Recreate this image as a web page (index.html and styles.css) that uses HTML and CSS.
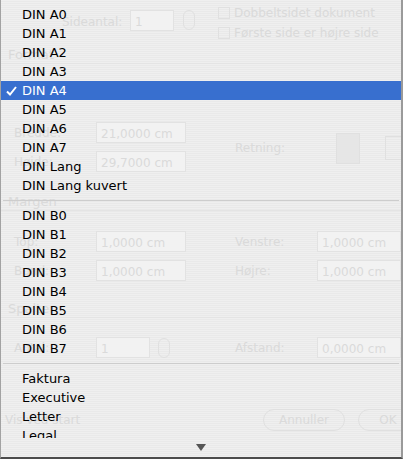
FILE: index.html
```html
<!DOCTYPE html>
<html lang="da">
<head>
  <meta charset="UTF-8" />
  <title>Papirformat</title>
  <link rel="stylesheet" href="styles.css">
</head>
<body>
  <!-- dialogen bag menuen -->
  <div class="dialog">
    <div class="pages">
      <span class="label">Sideantal:</span>
      <span class="field count">1</span>
      <span class="stepper"></span>
      <div class="checks">
        <div class="check"><span class="box"></span>Dobbeltsidet dokument</div>
        <div class="check"><span class="box"></span>Første side er højre side</div>
      </div>
    </div>

    <div class="heading">Format</div>
    <div class="section format">
      <div class="col">
        <div class="row"><span class="label">Bredde:</span><span class="field">21,0000 cm</span></div>
        <div class="row"><span class="label">Højde:</span><span class="field">29,7000 cm</span></div>
      </div>
      <div class="turn">
        <span class="label">Retning:</span>
        <span class="page portrait"></span>
        <span class="page landscape"></span>
      </div>
    </div>

    <div class="heading margin-head">Margen</div>
    <div class="section margins">
      <div class="row"><span class="label">Top:</span><span class="field">1,0000 cm</span><span class="label right">Venstre:</span><span class="field wide">1,0000 cm</span></div>
      <div class="row"><span class="label">Bund:</span><span class="field">1,0000 cm</span><span class="label right">Højre:</span><span class="field wide">1,0000 cm</span></div>
    </div>

    <div class="heading cols-head">Spalter</div>
    <div class="section cols">
      <div class="row"><span class="label">Antal:</span><span class="field short">1</span><span class="stepper"></span><span class="label right gap">Afstand:</span><span class="field wide">0,0000 cm</span></div>
    </div>

    <div class="footer">
      <span class="show">Vis ved start</span>
      <span class="btn">Annuller</span>
      <span class="btn ok">OK</span>
    </div>
  </div>

  <!-- popup-menuen -->
  <div class="menu">
    <div class="list">
      <div class="item"><span class="mark"></span>DIN A0</div>
      <div class="item"><span class="mark"></span>DIN A1</div>
      <div class="item"><span class="mark"></span>DIN A2</div>
      <div class="item"><span class="mark"></span>DIN A3</div>
      <div class="item on">
        <span class="mark">
          <svg width="11" height="10" viewBox="0 0 11 10"><polyline points="1,5.5 4,8.5 10,1" fill="none" stroke="#fff" stroke-width="2"/></svg>
        </span>DIN A4
      </div>
      <div class="item"><span class="mark"></span>DIN A5</div>
      <div class="item"><span class="mark"></span>DIN A6</div>
      <div class="item"><span class="mark"></span>DIN A7</div>
      <div class="item"><span class="mark"></span>DIN Lang</div>
      <div class="item"><span class="mark"></span>DIN Lang kuvert</div>
      <div class="sep"></div>
      <div class="item"><span class="mark"></span>DIN B0</div>
      <div class="item"><span class="mark"></span>DIN B1</div>
      <div class="item"><span class="mark"></span>DIN B2</div>
      <div class="item"><span class="mark"></span>DIN B3</div>
      <div class="item"><span class="mark"></span>DIN B4</div>
      <div class="item"><span class="mark"></span>DIN B5</div>
      <div class="item"><span class="mark"></span>DIN B6</div>
      <div class="item"><span class="mark"></span>DIN B7</div>
      <div class="sep"></div>
      <div class="item"><span class="mark"></span>Faktura</div>
      <div class="item"><span class="mark"></span>Executive</div>
      <div class="item"><span class="mark"></span>Letter</div>
      <div class="item"><span class="mark"></span>Legal</div>
    </div>
    <div class="more"><span class="arrow"></span></div>
  </div>
</body>
</html>
```

FILE: styles.css
```css
body {
  margin: 0;
  width: 403px;
  height: 459px;
  overflow: hidden;
  position: relative;
  font-family: "DejaVu Sans", sans-serif;
  background: repeating-linear-gradient(#efefef 0 1px, #e9e9e9 1px 2px);
}

/* faded dialog */
.dialog {
  height: 459px;
  font-size: 12px;
  color: #dadada;
}
.label {
  line-height: 16px;
}
.field {
  box-sizing: border-box;
  height: 21px;
  padding: 3px 0 0 4px;
  border: 1px solid #e2e2e2;
  background: #f2f2f2;
  line-height: 16px;
}
.stepper {
  box-sizing: border-box;
  width: 12px;
  height: 20px;
  border: 1px solid #e0e0e0;
  border-radius: 6px;
}

.pages {
  height: 47px;
  display: flex;
  align-items: flex-start;
  padding-left: 62px;
  box-sizing: border-box;
}
.pages .label {
  margin-top: 14px;
  width: 68px;
}
.pages .count {
  margin-top: 10px;
  width: 44px;
}
.pages .stepper {
  margin: 10px 0 0 9px;
}
.checks {
  margin: 5px 0 0 23px;
}
.check {
  display: flex;
  align-items: center;
  height: 16px;
  margin-bottom: 4px;
}
.box {
  width: 10px;
  height: 10px;
  border: 1px solid #e0e0e0;
  margin-right: 4px;
}

.heading {
  height: 16px;
  line-height: 16px;
  padding-left: 8px;
  font-size: 13px;
  border-bottom: 1px solid #e4e4e4;
}

.section {
  padding-left: 14px;
}
.row {
  display: flex;
  align-items: center;
  height: 21px;
  margin-bottom: 8px;
}
.row .label {
  width: 82px;
}
.row .field {
  width: 90px;
}
.row .label.right {
  width: 82px;
  margin-left: 49px;
}
.row .field.wide {
  width: 84px;
}
.row .field.short {
  width: 54px;
}
.row .stepper {
  margin-left: 8px;
}
.row .label.gap {
  margin-left: 65px;
}

.format {
  display: flex;
  margin-top: 58px;
}
.turn {
  display: flex;
  align-items: center;
  margin: -6px 0 0 49px;
}
.turn .label {
  width: 101px;
}
.page {
  box-sizing: border-box;
  border: 1px solid #e0e0e0;
}
.portrait {
  width: 24px;
  height: 31px;
  background: #e6e6e6;
}
.landscape {
  width: 20px;
  height: 24px;
  margin-left: 25px;
}

.margin-head {
  margin-top: 14px;
}
.margins {
  margin-top: 20px;
}
.cols-head {
  margin-top: 20px;
}
.cols {
  margin-top: 19px;
}

.footer {
  display: flex;
  align-items: center;
  margin-top: 51px;
  padding-left: 5px;
}
.show {
  flex: none;
  width: 258px;
}
.btn {
  flex: none;
  box-sizing: border-box;
  width: 82px;
  height: 22px;
  line-height: 20px;
  text-align: center;
  border: 1px solid #e0e0e0;
  border-radius: 11px;
}
.btn.ok {
  width: 60px;
  margin-left: 13px;
}

/* popup menu */
.menu {
  position: absolute;
  inset: 0;
  box-sizing: border-box;
  display: flex;
  flex-direction: column;
  padding-top: 5px;
  border-left: 1px solid #a2a2a2;
  border-right: 2px solid #9a9a9a;
  border-bottom: 2px solid #4c4c4c;
}
.list {
  flex: 1;
  overflow: hidden;
}
.item {
  display: flex;
  height: 19px;
  line-height: 19px;
  font-size: 13px;
  color: #000;
  white-space: nowrap;
}
.mark {
  width: 21px;
  flex: none;
  display: flex;
  align-items: center;
  padding-left: 5px;
  box-sizing: border-box;
}
.item.on {
  background: #386fcf;
  color: #fff;
}
.sep {
  height: 11px;
  display: flex;
  align-items: center;
}
.sep::after {
  content: "";
  flex: 1;
  height: 1px;
  margin: 0 2px;
  background: #cdcdcd;
}
.more {
  height: 19px;
  display: flex;
  justify-content: center;
  align-items: center;
}
.arrow {
  width: 0;
  height: 0;
  border-left: 5px solid transparent;
  border-right: 5px solid transparent;
  border-top: 7px solid #555;
}
```
